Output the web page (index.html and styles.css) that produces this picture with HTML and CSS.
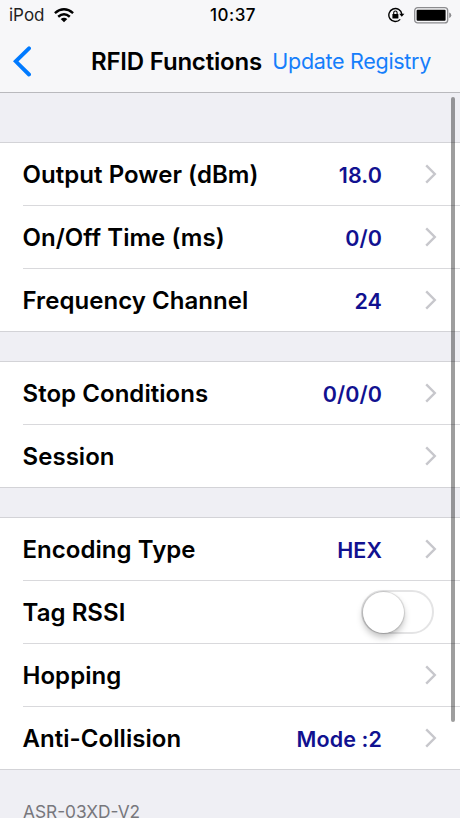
FILE: index.html
```html
<!DOCTYPE html>
<html lang="en">
<head>
  <meta charset="UTF-8">
  <meta name="viewport" content="width=device-width, initial-scale=1">
  <title>RFID Functions</title>
  <link rel="stylesheet" href="styles.css">
</head>
<body>
<svg class="sprite" width="0" height="0">
  <symbol id="arrow" viewBox="0 0 12 20"><path d="M1.2 1.4 L9.8 10 L1.2 18.6" fill="none" stroke="#c7c7cc" stroke-width="2.4"/></symbol>
</svg>
<header class="top">
  <div class="status">
    <div class="carrier">
      <span>iPod</span>
      <svg width="20" height="15" viewBox="0 0 20 15">
        <g fill="none" stroke="#000" stroke-width="2.5">
          <path d="M0.9 5.1 Q10 -2.5 19.1 5.1"/>
          <path d="M4.2 8.7 Q10 3.7 15.8 8.7"/>
        </g>
        <path d="M6.7 11 Q10 8.4 13.3 11 L10 14.3 Z"/>
      </svg>
    </div>
    <div class="clock">10:37</div>
    <div class="power">
      <svg width="17" height="16" viewBox="0 0 17 16">
        <path d="M12.2 12.4 A6.5 6.5 0 1 1 13.8 7.2" fill="none" stroke="#000" stroke-width="1.4"/>
        <path d="M11.2 6.7 H16.4 L13.8 9.8 Z"/>
        <rect x="4.4" y="7" width="6" height="4.6" rx="0.5"/>
        <path d="M5.7 7.3 V5.7 a1.7 1.7 0 0 1 3.4 0 V7.3" fill="none" stroke="#000" stroke-width="1.1"/>
      </svg>
      <svg width="38" height="17" viewBox="0 0 38 17">
        <rect x="0.7" y="0.7" width="33" height="15.2" rx="3" fill="none" stroke="#8c8c8f" stroke-width="1.3"/>
        <rect x="2.6" y="2.8" width="29" height="11" rx="1"/>
        <path d="M35.2 5.6 Q37.3 6.2 37.3 8.3 Q37.3 10.4 35.2 11 Z" fill="#8c8c8f"/>
      </svg>
    </div>
  </div>
  <nav class="navbar">
    <svg class="back" width="18" height="31" viewBox="0 0 18 31"><path d="M16 2.3 L2.7 15.3 L16 28.5" fill="none" stroke="#007aff" stroke-width="3.9" stroke-linecap="round" stroke-linejoin="miter"/></svg>
    <h1>RFID Functions</h1>
    <a class="update" href="#">Update Registry</a>
  </nav>
</header>

<main>
  <ul class="group">
    <li class="row"><span class="label">Output Power (dBm)</span><span class="value">18.0</span><svg class="arrow"><use href="#arrow"/></svg></li>
    <li class="row"><span class="label">On/Off Time (ms)</span><span class="value">0/0</span><svg class="arrow"><use href="#arrow"/></svg></li>
    <li class="row"><span class="label">Frequency Channel</span><span class="value">24</span><svg class="arrow"><use href="#arrow"/></svg></li>
  </ul>

  <ul class="group">
    <li class="row"><span class="label">Stop Conditions</span><span class="value">0/0/0</span><svg class="arrow"><use href="#arrow"/></svg></li>
    <li class="row"><span class="label">Session</span><svg class="arrow"><use href="#arrow"/></svg></li>
  </ul>

  <ul class="group">
    <li class="row"><span class="label">Encoding Type</span><span class="value">HEX</span><svg class="arrow"><use href="#arrow"/></svg></li>
    <li class="row"><span class="label">Tag RSSI</span><span class="switch"><span class="knob"></span></span></li>
    <li class="row"><span class="label">Hopping</span><svg class="arrow"><use href="#arrow"/></svg></li>
    <li class="row"><span class="label">Anti-Collision</span><span class="value">Mode :2</span><svg class="arrow"><use href="#arrow"/></svg></li>
  </ul>

  <p class="model">ASR-03XD-V2</p>
  <div class="scrollbar"></div>
</main>
</body>
</html>
```

FILE: styles.css
```css
* { box-sizing: border-box; }
body { font-family: Inter, "Liberation Sans", sans-serif; background: #efeff4; color: #000; margin: 0; height: 818px; overflow: hidden; }
.sprite { display: block; }

.top { height: 93px; background: #f7f7f9; border-bottom: 1px solid #b9b9bd; }
.status { display: grid; grid-template-columns: 1fr auto 1fr; align-items: center; height: 30px; padding: 0 9px; }
.carrier { display: flex; align-items: center; gap: 9px; font-size: 17px; color: #222; }
.clock { font-size: 17px; font-weight: 500; letter-spacing: 0.5px; padding-left: 6px; }
.power { display: flex; align-items: center; justify-content: flex-end; gap: 9px; margin-right: -1px; }
.navbar { display: flex; align-items: center; height: 62px; padding: 0 29px 0 13px; }
.back { margin-right: 60px; }
h1 { font-size: 24px; font-weight: 600; letter-spacing: -0.2px; margin: 0; white-space: nowrap; }
.update { margin-left: auto; font-size: 21.5px; letter-spacing: -0.3px; color: #157efb; text-decoration: none; white-space: nowrap; }

main { position: relative; padding-top: 49px; }
.group { list-style: none; margin: 0 0 29px; padding: 0; background: #fff; border-top: 1px solid #d3d3d7; border-bottom: 1px solid #d3d3d7; }
.row { display: flex; align-items: center; height: 62px; margin-left: 23px; padding-right: 23px; }
.row + .row { height: 63px; border-top: 1px solid #d9d9dc; }
.label { font-size: 24px; font-weight: 620; letter-spacing: 0.05px; flex: 1; margin-left: -0.5px; white-space: nowrap; }
.value { font-size: 21.5px; font-weight: 620; letter-spacing: 0.1px; color: #111190; margin: 2px 43px 0 0; }
.arrow { width: 12px; height: 20px; }

.switch { width: 73px; height: 44px; margin-right: 3px; border: 2px solid #e4e4e5; border-radius: 22px; }
.knob { display: block; width: 41px; height: 41px; border-radius: 50%; background: #fff; box-shadow: 0 0 1px 1px rgba(0,0,0,0.13), 0 4px 7px rgba(0,0,0,0.26); }

.model { margin: 0 0 0 23px; font-size: 17.3px; line-height: 26px; color: #77777c; }
.scrollbar { position: absolute; top: 4px; right: 5px; width: 4px; height: 625px; border-radius: 2px; background: rgba(0,0,0,0.38); }
```
